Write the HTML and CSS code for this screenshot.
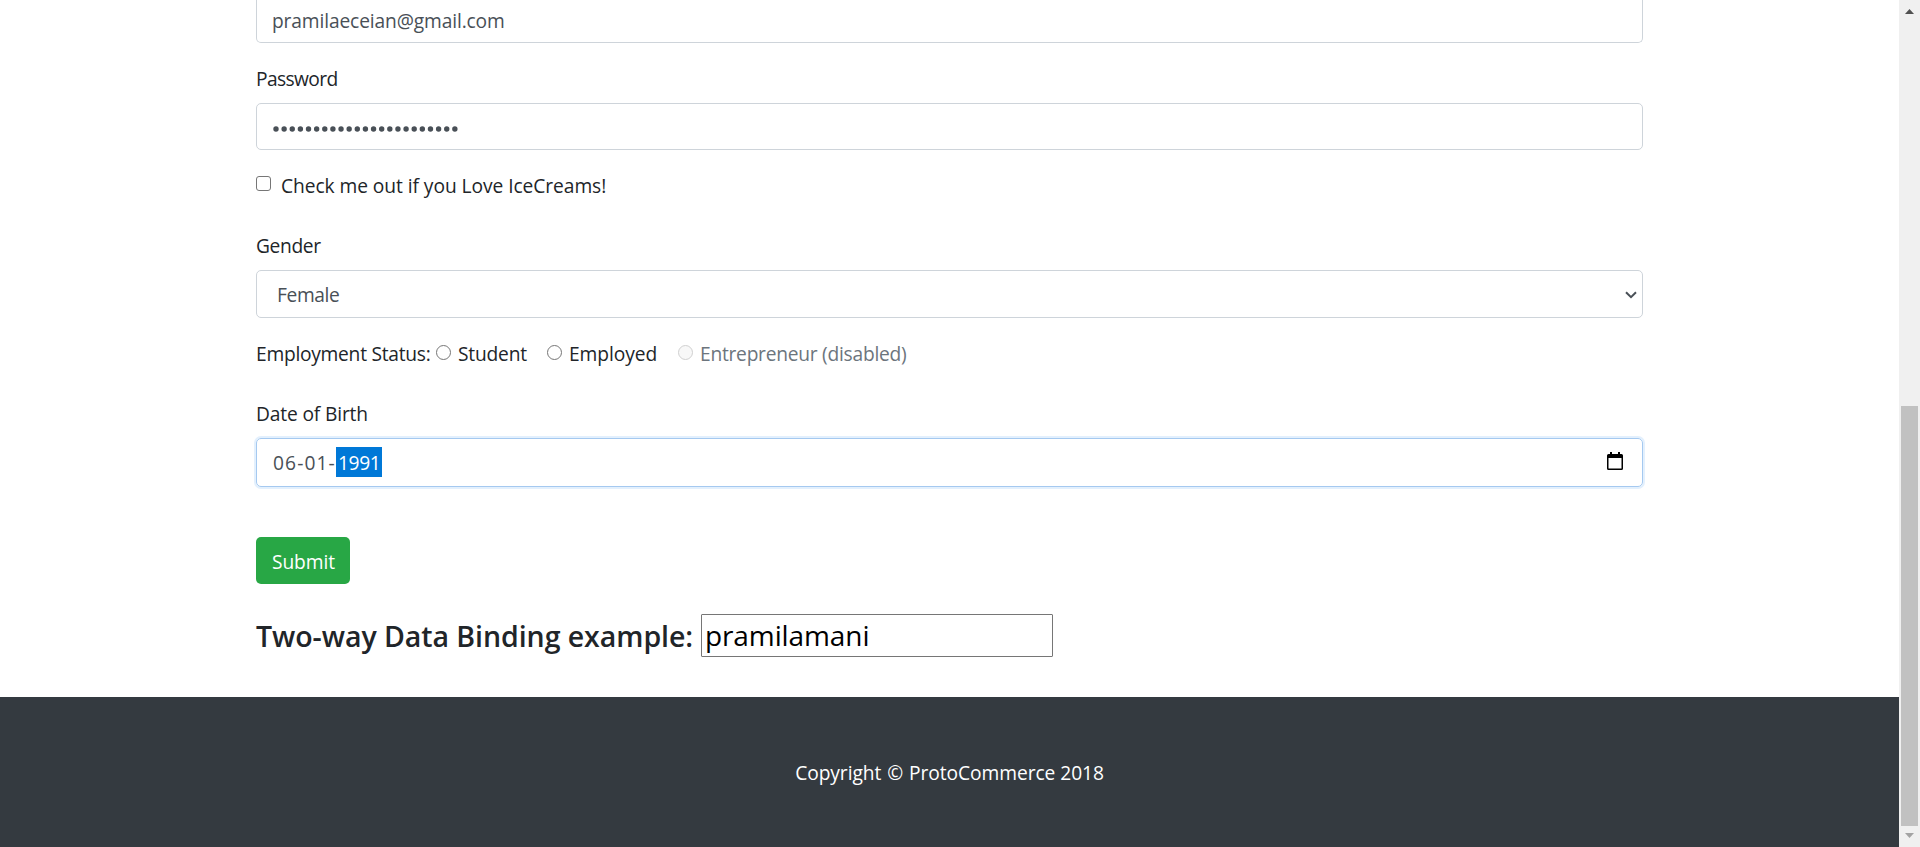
FILE: index.html
```
<!DOCTYPE html>
<html lang="en">
<head>
<meta charset="utf-8">
<title>ProtoCommerce</title>
<link rel="stylesheet" href="styles.css">
</head>
<body>
<div class="page">
  <main class="container">
    <div class="control control-email"><span class="t-email">pramilaeceian@gmail.com</span></div>
    <div class="label"><span class="t-password">Password</span></div>
    <div class="control control-password">
      <svg class="dots" width="186" height="8" viewBox="0 0 186 8"><line x1="4" y1="4" x2="184" y2="4"/></svg>
    </div>
    <div class="check-row"><span class="box"></span><span class="t-check">Check me out if you Love IceCreams!</span></div>
    <div class="label label-gap"><span class="t-gender">Gender</span></div>
    <div class="control control-select"><span class="t-female">Female</span>
      <svg class="chevron" width="12" height="8" viewBox="0 0 12 8"><path d="M1 1.3 6 6.2 11 1.3"/></svg>
    </div>
    <div class="radio-row">
      <span class="t-status">Employment Status:</span>
      <span class="option option-student"><span class="radio"></span><span class="t-student">Student</span></span>
      <span class="option option-employed"><span class="radio"></span><span class="t-employed">Employed</span></span>
      <span class="option option-disabled"><span class="radio"></span><span class="t-entre">Entrepreneur (disabled)</span></span>
    </div>
    <div class="label label-gap"><span class="t-dob">Date of Birth</span></div>
    <div class="control control-date"><span class="t-date">06-01-</span><span class="year">1991</span>
      <svg class="calendar" width="16" height="18" viewBox="0 0 16 18"><path d="M3 0h2v2h6V0h2v2h1.5Q16 2 16 3.5v13q0 1.500-1.500 1.500h-13Q0 18 0 16.500v-13Q0 2 1.500 2H3zM1.500 6v10.500h13V6z"/></svg>
    </div>
    <div class="submit">Submit</div>
    <div class="binding"><span class="t-heading">Two-way Data Binding example:</span><span class="name-input">pramilamani</span></div>
  </main>
  <footer class="footer">Copyright <span class="mark">©</span> ProtoCommerce 2018</footer>
</div>
<aside class="scrollbar">
  <svg class="arrow" width="9" height="5" viewBox="0 0 9 5"><path d="M0 5 4.500 0 9 5z" fill="#505050"/></svg>
  <div class="thumb"></div>
  <svg class="arrow" width="9" height="5" viewBox="0 0 9 5"><path d="M0 0h9L4.500 5z" fill="#a3a3a3"/></svg>
</aside>
</body>
</html>
```
FILE: styles.css
```
* { box-sizing: border-box; }
body { margin: 0; height: 847px; overflow: hidden; display: flex; background: #fff; color: #212529; font: 19.2px/30px "Open Sans", "Noto Sans", sans-serif; white-space: nowrap; }
.page { flex: 1; display: flex; flex-direction: column; }
.container { width: 1387px; margin-left: 256px; flex: 1; }
.control { display: flex; align-items: center; border: 1px solid #ced4da; border-radius: 5px; padding: 0 15px; color: #495057; }
.control-email { height: 43px; border-top: 0; border-radius: 0 0 5px 5px; }
.t-email { letter-spacing: -0.13px; }
.label { margin: 21px 0 9px; }
.label-gap { margin-top: 30px; }
.t-password { letter-spacing: -0.6px; }
.t-gender { letter-spacing: -0.35px; }
.t-dob { letter-spacing: -0.15px; }
.control-password { height: 47px; padding-top: 4px; }
.dots { stroke: #495057; stroke-width: 5.400; stroke-linecap: round; stroke-dasharray: 0 8.130; fill: none; }
.check-row { display: flex; margin-top: 21px; }
.t-check { letter-spacing: -0.06px; }
.box { width: 15px; height: 15px; margin: 5px 10px 0 0; border: 1px solid #767676; border-radius: 3px; }
.control-select { height: 48px; padding: 1px 5px 0 20px; justify-content: space-between; }
.t-female { letter-spacing: -0.4px; }
.chevron { fill: none; stroke: #495057; stroke-width: 2; }
.radio-row { display: flex; margin-top: 21px; }
.t-status { width: 180px; letter-spacing: -0.26px; }
.option { display: flex; }
.radio { width: 15px; height: 15px; margin: 5.500px 7px 0 0; border: 1px solid #767676; border-radius: 50%; }
.option-student { width: 111px; letter-spacing: -0.2px; }
.option-employed { width: 131px; letter-spacing: -0.08px; }
.option-disabled { color: #6c757d; letter-spacing: -0.25px; }
.option-disabled .radio { border-color: #d0d0d0; background: #f8f8f8; }
.control-date { height: 49px; padding-left: 16px; border-color: #a5c9f0; box-shadow: 0 0 0 2px #e3f0fd; }
.t-date { width: 63px; letter-spacing: 1.1px; }
.year { width: 46px; height: 30px; line-height: 32px; margin-bottom: 1px; padding-left: 2px; background: #0078d7; color: #fff; letter-spacing: -0.4px; }
.calendar { margin: 0 4px 3px auto; }
.submit { width: 94px; height: 47px; margin-top: 50px; padding: 10px 16px; border-radius: 5px; background: #28a745; color: #fff; line-height: 30px; letter-spacing: -0.1px; }
.binding { display: flex; align-items: center; margin-top: 30px; font-size: 28.500px; font-weight: 600; height: 43px; }
.t-heading { width: 445px; letter-spacing: -0.05px; }
.name-input { width: 352px; height: 43px; padding: 5px 3px; border: 1px solid #767676; border-radius: 1px; color: #000; font-weight: 400; font-size: 28px; letter-spacing: -0.1px; }
.footer { height: 150px; padding-top: 61px; text-align: center; background: #343a40; color: #fff; }
.mark { margin: 0 1px; }
.footer { letter-spacing: -0.06px; }
.scrollbar { width: 21px; background: #f0f0f0; display: flex; flex-direction: column; align-items: center; padding: 9px 0; }
.thumb { width: 17px; height: 420px; margin: 392px 0 7px; background: #c1c1c1; }
```
